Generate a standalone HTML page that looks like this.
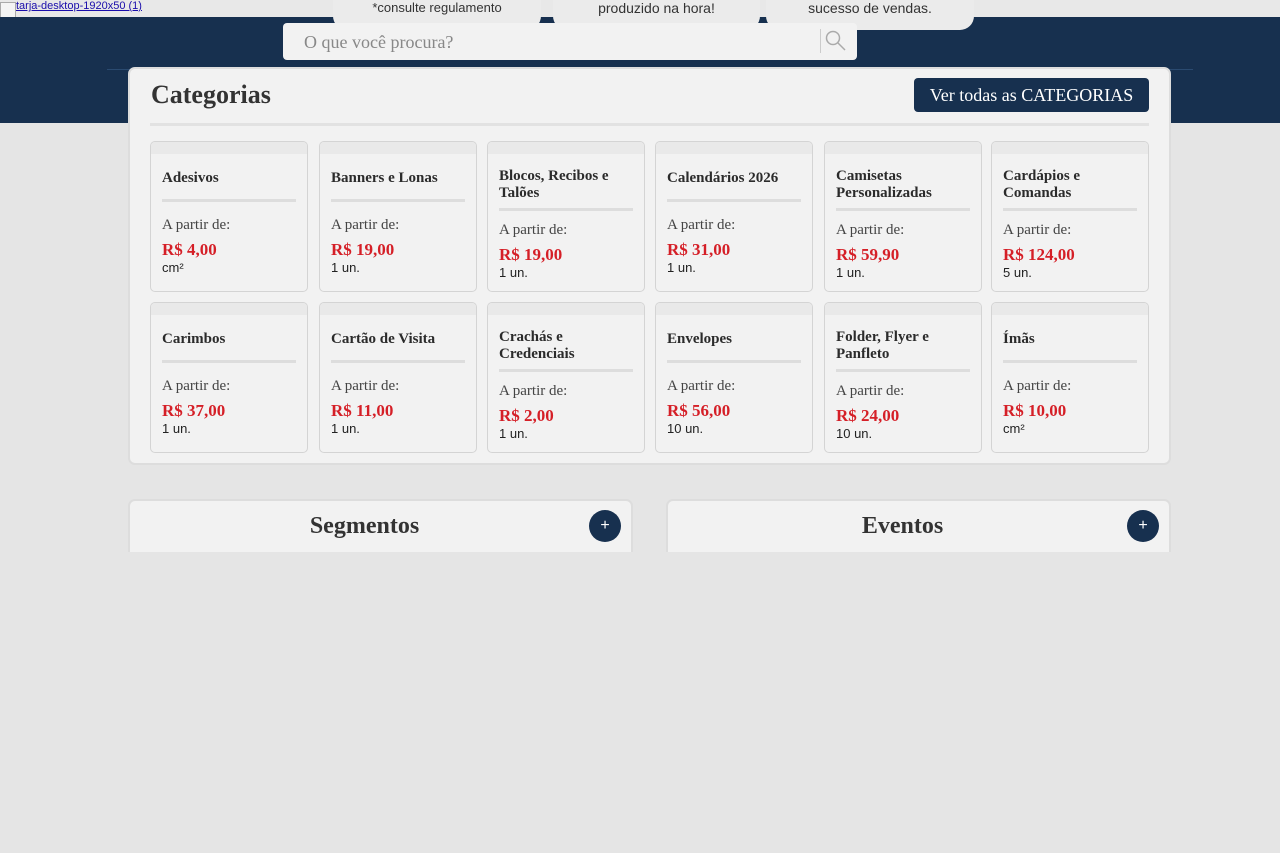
<!DOCTYPE html>
<html><head><meta charset="utf-8"><style>
*{box-sizing:border-box;margin:0;padding:0}
body{width:1280px;height:853px;background:#e5e5e5;font-family:"Liberation Serif",serif;position:relative;overflow:hidden}
.top{position:absolute;left:0;top:0;width:1280px;height:17px;background:#e8e8e8}
.top a{position:absolute;left:16px;top:0;font:11px "Liberation Sans",sans-serif;color:#1a0dab;text-decoration:underline}
.broken{position:absolute;left:0;top:2px;width:16px;height:16px;border:1px solid #aaa;background:#f4f4f4}
.hdr{position:absolute;left:0;top:17px;width:1280px;height:106px;background:#17304f}
.hline{position:absolute;left:107px;top:69px;width:1086px;height:1px;background:#2a4a70}
.tab{position:absolute;top:0;height:30px;background:#ebebeb;border-radius:0 0 14px 14px;font:13px "Liberation Sans",sans-serif;color:#333;text-align:center;line-height:16px}
.search{position:absolute;left:283px;top:23px;width:574px;height:37px;background:#f2f2f2;border-radius:4px}
.search span{position:absolute;left:21px;top:9px;font-size:18px;color:#888}
.search i{position:absolute;left:537px;top:6px;width:1px;height:24px;background:#ccc}
.nav{position:absolute;top:85px;font-size:16px;color:#e8edf3}
.box{position:absolute;left:128px;top:67px;width:1043px;height:398px;background:#f2f2f2;border:2px solid #ddd;border-radius:7px}
.box h2{position:absolute;left:21px;top:11px;font-size:26px;color:#333;font-weight:bold}
.btn{position:absolute;left:784px;top:9px;width:235px;height:34px;background:#17304f;border-radius:4px;color:#fff;font-size:18px;text-align:center;line-height:34px}
.sep{position:absolute;left:20px;top:54px;width:999px;height:3px;background:#e2e2e2}
.card{position:absolute;width:158px;height:151px;border:1px solid #d4d4d4;border-radius:5px;background:#f2f2f2;overflow:hidden}
.card:before{content:"";position:absolute;left:0;top:0;right:0;height:12px;background:#e9e9e9}
.in{position:absolute;left:11px;right:11px;top:12px;bottom:0;display:flex;flex-direction:column;justify-content:center}
.in.tw{justify-content:flex-start;padding-top:14px}
.t{font-size:15px;font-weight:bold;color:#2b2b2b;line-height:17px;padding-bottom:12px;border-bottom:3px solid #ddd;margin-bottom:15px}
.tw .t{padding-bottom:6px;margin-bottom:11px}
.a{font-size:15px;color:#444;line-height:17px}
.p{font-size:17px;font-weight:bold;color:#d51f27;line-height:20px;margin-top:6px}
.u{font:13px "Liberation Sans",sans-serif;color:#222;line-height:15px}
.sb{position:absolute;top:499px;width:505px;height:53px;background:#f2f2f2;border:2px solid #ddd;border-bottom:none;border-radius:7px 7px 0 0;text-align:center;font-size:24px;font-weight:bold;color:#333;line-height:50px;padding-right:32px}
.pl{position:absolute;right:10px;top:9px;width:32px;height:32px;border-radius:50%;background:#17304f;color:#fff;font:16px "Liberation Sans",sans-serif;line-height:31px;text-align:center;font-weight:normal}
</style></head><body>
<div class="top"><div class="broken"></div><a>tarja-desktop-1920x50 (1)</a></div>
<div class="hdr"></div>
<div class="hline"></div>
<div class="tab" style="left:333px;width:208px">*consulte regulamento</div>
<div class="tab" style="left:553px;width:207px;font-size:14px">produzido na hora!</div>
<div class="tab" style="left:766px;width:208px;font-size:14px">sucesso de vendas.</div>
<div class="search"><span>O que você procura?</span><i></i>
<svg style="position:absolute;left:542px;top:7px" width="22" height="22" viewBox="0 0 22 22"><circle cx="8" cy="8" r="6.5" fill="none" stroke="#aaa" stroke-width="1.5"/><path d="M13 13L20 20" stroke="#aaa" stroke-width="1.5"/></svg></div>
<div class="nav" style="left:278px">Segmentos</div>
<div class="nav" style="left:420px">Eventos</div>
<div class="box">
<h2>Categorias</h2>
<div class="btn">Ver todas as CATEGORIAS</div>
<div class="sep"></div>
</div>
<div class="card" style="left:150px;top:141px"><div class="in"><div class="t">Adesivos</div><div class="a">A partir de:</div><div class="p">R$ 4,00</div><div class="u">cm²</div></div></div>
<div class="card" style="left:319px;top:141px"><div class="in"><div class="t">Banners e Lonas</div><div class="a">A partir de:</div><div class="p">R$ 19,00</div><div class="u">1 un.</div></div></div>
<div class="card" style="left:487px;top:141px"><div class="in tw"><div class="t">Blocos, Recibos e Talões</div><div class="a">A partir de:</div><div class="p">R$ 19,00</div><div class="u">1 un.</div></div></div>
<div class="card" style="left:655px;top:141px"><div class="in"><div class="t">Calendários 2026</div><div class="a">A partir de:</div><div class="p">R$ 31,00</div><div class="u">1 un.</div></div></div>
<div class="card" style="left:824px;top:141px"><div class="in tw"><div class="t">Camisetas Personalizadas</div><div class="a">A partir de:</div><div class="p">R$ 59,90</div><div class="u">1 un.</div></div></div>
<div class="card" style="left:991px;top:141px"><div class="in tw"><div class="t">Cardápios e Comandas</div><div class="a">A partir de:</div><div class="p">R$ 124,00</div><div class="u">5 un.</div></div></div>
<div class="card" style="left:150px;top:302px"><div class="in"><div class="t">Carimbos</div><div class="a">A partir de:</div><div class="p">R$ 37,00</div><div class="u">1 un.</div></div></div>
<div class="card" style="left:319px;top:302px"><div class="in"><div class="t">Cartão de Visita</div><div class="a">A partir de:</div><div class="p">R$ 11,00</div><div class="u">1 un.</div></div></div>
<div class="card" style="left:487px;top:302px"><div class="in tw"><div class="t">Crachás e Credenciais</div><div class="a">A partir de:</div><div class="p">R$ 2,00</div><div class="u">1 un.</div></div></div>
<div class="card" style="left:655px;top:302px"><div class="in"><div class="t">Envelopes</div><div class="a">A partir de:</div><div class="p">R$ 56,00</div><div class="u">10 un.</div></div></div>
<div class="card" style="left:824px;top:302px"><div class="in tw"><div class="t">Folder, Flyer e Panfleto</div><div class="a">A partir de:</div><div class="p">R$ 24,00</div><div class="u">10 un.</div></div></div>
<div class="card" style="left:991px;top:302px"><div class="in"><div class="t">Ímãs</div><div class="a">A partir de:</div><div class="p">R$ 10,00</div><div class="u">cm²</div></div></div>
<div class="sb" style="left:128px">Segmentos<div class="pl">+</div></div>
<div class="sb" style="left:666px">Eventos<div class="pl">+</div></div>
</body></html>
